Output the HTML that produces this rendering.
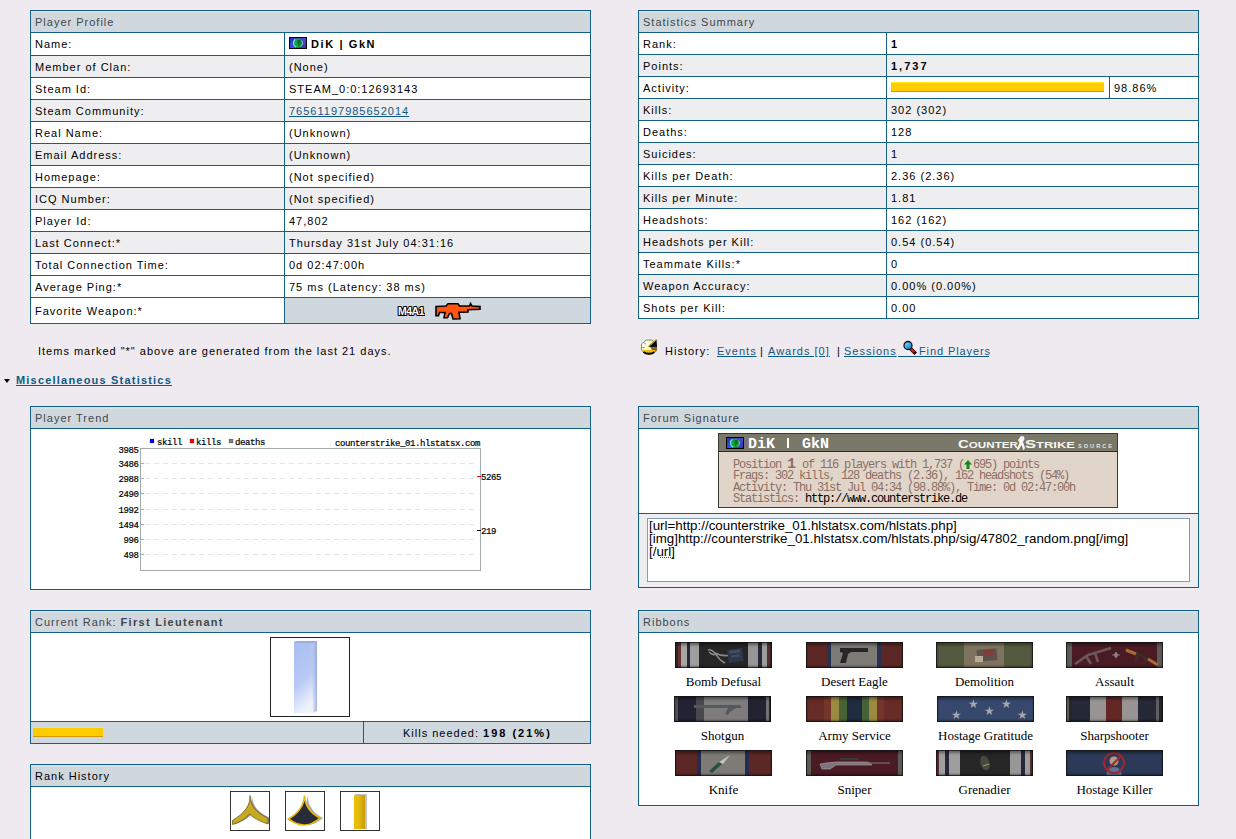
<!DOCTYPE html>
<html><head><meta charset="utf-8">
<style>
html,body{margin:0;padding:0;}
body{width:1236px;height:839px;overflow:hidden;background:#efeaf0;font-family:"Liberation Sans",sans-serif;font-size:11px;letter-spacing:1px;color:#000;position:relative;}
.abs{position:absolute;}
.panel{position:absolute;box-sizing:border-box;border:1px solid #13618a;background:#fff;}
.hd{position:absolute;left:0;right:0;top:0;height:21px;background:linear-gradient(#d9dee4 0 2px,#d0d8de 2px);border-bottom:1px solid #13618a;color:#41474c;}
.hd span{position:absolute;left:4px;top:5px;line-height:13px;white-space:nowrap;}
.tbl{position:absolute;left:0;right:0;}
.row{position:absolute;left:0;right:0;height:21px;border-bottom:1px solid #13618a;background:#fff;}
.row.g{background:#eeedef;}
.row .l{position:absolute;left:4px;top:5px;line-height:13px;white-space:nowrap;}
.row .v{position:absolute;top:5px;line-height:13px;white-space:nowrap;}
b,.bb{letter-spacing:2px;}
.row .dv{position:absolute;top:0;bottom:-1px;width:1px;background:#13618a;}
a{color:#0f5982;text-decoration:underline;}
.rib{position:absolute;width:97px;height:26px;overflow:hidden;filter:saturate(0.85) brightness(0.9) blur(0.35px);}
.rib svg{position:absolute;left:0;top:0;}
.rsh{position:absolute;left:0;top:0;right:0;bottom:0;box-shadow:inset 0 0 0 1px rgba(20,20,20,0.75), inset 0 3px 3px rgba(0,0,0,0.4), inset 0 -2px 2px rgba(0,0,0,0.35);}
.rlab{position:absolute;width:157px;text-align:center;font-family:"Liberation Serif",serif;font-size:13px;line-height:15px;letter-spacing:0;white-space:nowrap;color:#000;}
</style></head><body>

<!-- Player Profile -->
<div class="panel" style="left:30px;top:10px;width:561px;height:314px;">
  <div class="hd"><span>Player Profile</span></div>
  <div class="row" style="top:22px;height:22px;"><span class="l" style="top:5px">Name:</span><div class="dv" style="left:253px"></div>
    <svg class="abs" style="left:258px;top:4px" width="18" height="12" viewBox="0 0 18 12"><defs><linearGradient id="fg" x1="0" y1="0" x2="1" y2="1"><stop offset="0" stop-color="#2a2ab8"/><stop offset="0.5" stop-color="#4848d8"/><stop offset="1" stop-color="#3030b0"/></linearGradient></defs><rect x="0.5" y="0.5" width="17" height="11" fill="url(#fg)" stroke="#000"/><circle cx="9" cy="6" r="4.6" fill="#18a040"/><path d="M6.4,2.3 A4.6,4.6 0 0 0 7.2,10.2" stroke="#48f0e8" stroke-width="1.4" fill="none"/><path d="M8.5,3 L11.5,3.2 L12,5.5 L10.5,7.5 L9.5,9.5 L8.8,7 Z" fill="#086a20"/><path d="M12.8,3.6 A4.6,4.6 0 0 1 12,9.6" stroke="#90e0e8" stroke-width="0.7" fill="none"/></svg>
    <span class="v" style="left:280px;top:5px;font-weight:bold;letter-spacing:1.6px;">DiK | GkN</span></div>
  <div class="row g" style="top:45px;"><span class="l">Member of Clan:</span><div class="dv" style="left:253px"></div><span class="v" style="left:258px">(None)</span></div>
  <div class="row" style="top:67px;"><span class="l">Steam Id:</span><div class="dv" style="left:253px"></div><span class="v" style="left:258px">STEAM_0:0:12693143</span></div>
  <div class="row g" style="top:89px;"><span class="l">Steam Community:</span><div class="dv" style="left:253px"></div><span class="v" style="left:258px"><a>76561197985652014</a></span></div>
  <div class="row" style="top:111px;"><span class="l">Real Name:</span><div class="dv" style="left:253px"></div><span class="v" style="left:258px">(Unknown)</span></div>
  <div class="row g" style="top:133px;"><span class="l">Email Address:</span><div class="dv" style="left:253px"></div><span class="v" style="left:258px">(Unknown)</span></div>
  <div class="row" style="top:155px;"><span class="l">Homepage:</span><div class="dv" style="left:253px"></div><span class="v" style="left:258px">(Not specified)</span></div>
  <div class="row g" style="top:177px;"><span class="l">ICQ Number:</span><div class="dv" style="left:253px"></div><span class="v" style="left:258px">(Not specified)</span></div>
  <div class="row" style="top:199px;"><span class="l">Player Id:</span><div class="dv" style="left:253px"></div><span class="v" style="left:258px">47,802</span></div>
  <div class="row g" style="top:221px;"><span class="l">Last Connect:*</span><div class="dv" style="left:253px"></div><span class="v" style="left:258px">Thursday 31st July 04:31:16</span></div>
  <div class="row" style="top:243px;"><span class="l">Total Connection Time:</span><div class="dv" style="left:253px"></div><span class="v" style="left:258px">0d 02:47:00h</span></div>
  <div class="row" style="top:265px;"><span class="l">Average Ping:*</span><div class="dv" style="left:253px"></div><span class="v" style="left:258px">75 ms (Latency: 38 ms)</span></div>
  <div class="row" style="top:287px;height:25px;border-bottom:none;"><span class="l" style="top:7px">Favorite Weapon:*</span><div class="dv" style="left:253px;bottom:0"></div>
    <div class="abs" style="left:254px;top:0;right:0;bottom:0;background:#d0d8df;"><svg class="abs" style="left:112px;top:7px" width="28" height="12" viewBox="0 0 28 12"><text x="14" y="9.8" text-anchor="middle" font-family="Liberation Sans" font-weight="bold" font-size="10.5" letter-spacing="-0.5" fill="#fff" stroke="#000" stroke-width="2.2" paint-order="stroke" stroke-linejoin="round">M4A1</text></svg>
    <svg class="abs" style="left:149px;top:4px" width="48" height="19" viewBox="-1 -1 48 19"><path d="M1,3.5 L11,3 L13,0.8 L23,0.8 L24.5,3 L34.5,3 L35.5,0.5 L37,3 L45,3.6 L45,6.2 L33,6.8 L33,9 L24,9.2 L25,15.8 L18,16 L16.5,10.5 L14.5,10.5 L12.5,14.8 L9,14.8 L10,9.5 L4.5,9.5 L3.5,12.8 L1,12.8 Z" fill="#ff5510" stroke="#000" stroke-width="1.6" stroke-linejoin="miter"/></svg></div>
  </div>
</div>

<!-- Statistics Summary -->
<div class="panel" style="left:638px;top:10px;width:561px;height:309px;">
  <div class="hd"><span>Statistics Summary</span></div>
  <div class="row" style="top:22px;"><span class="l">Rank:</span><div class="dv" style="left:247px"></div><span class="v" style="left:252px;font-weight:bold;letter-spacing:1.5px">1</span></div>
  <div class="row g" style="top:44px;"><span class="l">Points:</span><div class="dv" style="left:247px"></div><span class="v" style="left:252px;font-weight:bold;letter-spacing:2px">1,737</span></div>
  <div class="row" style="top:66px;"><span class="l">Activity:</span><div class="dv" style="left:247px"></div>
    <div class="abs" style="left:252px;top:5px;width:213px;height:10px;background:linear-gradient(#ffee10 0 1px,#ffcc00 1px 9px,#d49a00 9px 10px);"></div>
    <div class="dv" style="left:470px"></div><span class="v" style="left:475px">98.86%</span></div>
  <div class="row g" style="top:88px;"><span class="l">Kills:</span><div class="dv" style="left:247px"></div><span class="v" style="left:252px">302 (302)</span></div>
  <div class="row" style="top:110px;"><span class="l">Deaths:</span><div class="dv" style="left:247px"></div><span class="v" style="left:252px">128</span></div>
  <div class="row g" style="top:132px;"><span class="l">Suicides:</span><div class="dv" style="left:247px"></div><span class="v" style="left:252px">1</span></div>
  <div class="row" style="top:154px;"><span class="l">Kills per Death:</span><div class="dv" style="left:247px"></div><span class="v" style="left:252px">2.36 (2.36)</span></div>
  <div class="row g" style="top:176px;"><span class="l">Kills per Minute:</span><div class="dv" style="left:247px"></div><span class="v" style="left:252px">1.81</span></div>
  <div class="row" style="top:198px;"><span class="l">Headshots:</span><div class="dv" style="left:247px"></div><span class="v" style="left:252px">162 (162)</span></div>
  <div class="row g" style="top:220px;"><span class="l">Headshots per Kill:</span><div class="dv" style="left:247px"></div><span class="v" style="left:252px">0.54 (0.54)</span></div>
  <div class="row" style="top:242px;"><span class="l">Teammate Kills:*</span><div class="dv" style="left:247px"></div><span class="v" style="left:252px">0</span></div>
  <div class="row g" style="top:264px;"><span class="l">Weapon Accuracy:</span><div class="dv" style="left:247px"></div><span class="v" style="left:252px">0.00% (0.00%)</span></div>
  <div class="row" style="top:286px;border-bottom:none;"><span class="l">Shots per Kill:</span><div class="dv" style="left:247px;bottom:0"></div><span class="v" style="left:252px">0.00</span></div>
</div>


<!-- notes -->
<div class="abs" style="left:38px;top:345px;line-height:13px;white-space:nowrap;">Items marked "*" above are generated from the last 21 days.</div>

<!-- history line -->
<svg class="abs" style="left:641px;top:339px" width="16" height="16" viewBox="0 0 16 16"><defs><radialGradient id="hg" cx="0.3" cy="0.35" r="0.75"><stop offset="0" stop-color="#ffffff"/><stop offset="0.55" stop-color="#fbf8b8"/><stop offset="1" stop-color="#e8d040"/></radialGradient></defs><path d="M5,1 L11,1 L15.5,5 L15.5,11 L12,15 L4,15 L0.5,11 L0.5,5 Z" fill="url(#hg)" stroke="#707070" stroke-width="0.8"/><path d="M7.5,7.5 L15.5,0.5 L16,8 L10,8.5 Z" fill="#0a0a0a"/><path d="M10,8.5 L16,8 L15.5,12.5 L11,12 Z" fill="#8a5a2a"/><path d="M1.5,11 L14.5,11 L12.5,14 L3.5,14 Z" fill="#f0c000"/><path d="M2.5,13 Q8,16.5 13.5,13" stroke="#000" stroke-width="1.8" fill="none"/><line x1="7.5" y1="7.5" x2="15.5" y2="0.5" stroke="#c09000" stroke-width="1.1"/><path d="M3,3.5 L5,5.5 M1.5,8.5 L3.5,8.5" stroke="#606060" stroke-width="0.8"/></svg>
<div class="abs" style="left:665px;top:345px;line-height:13px;white-space:nowrap;">History:</div>
<div class="abs" style="left:717px;top:345px;line-height:13px;white-space:nowrap;"><a>Events</a></div>
<div class="abs" style="left:760px;top:345px;line-height:13px;">|</div>
<div class="abs" style="left:768px;top:345px;line-height:13px;white-space:nowrap;"><a>Awards [0]</a></div>
<div class="abs" style="left:837px;top:345px;line-height:13px;">|</div>
<div class="abs" style="left:844px;top:345px;line-height:13px;white-space:nowrap;"><a>Sessions</a></div>
<div class="abs" style="left:898px;top:356px;width:91px;height:1px;background:#0f5982;"></div><div class="abs" style="left:919px;top:345px;line-height:13px;white-space:nowrap;color:#0f5982;letter-spacing:0.9px;">Find Players</div>
<svg class="abs" style="left:902px;top:340px" width="15" height="15" viewBox="0 0 15 15"><defs><linearGradient id="mg" x1="0" y1="0" x2="1" y2="1"><stop offset="0" stop-color="#b8e8ff"/><stop offset="0.5" stop-color="#38b0f0"/><stop offset="1" stop-color="#2070c0"/></linearGradient></defs><line x1="9" y1="9" x2="12.5" y2="12.5" stroke="#300" stroke-width="3.6" stroke-linecap="square"/><line x1="9" y1="9" x2="12.3" y2="12.3" stroke="#e01818" stroke-width="2"/><circle cx="6" cy="5.5" r="4" fill="url(#mg)" stroke="#101418" stroke-width="1.3"/></svg>

<!-- misc stats -->
<div class="abs" style="left:4px;top:379px;width:0;height:0;border-left:3.5px solid transparent;border-right:3.5px solid transparent;border-top:4px solid #000;"></div>
<div class="abs" style="left:16px;top:374px;line-height:13px;white-space:nowrap;font-weight:bold;letter-spacing:1.2px;"><a>Miscellaneous Statistics</a></div>

<!-- Player Trend -->
<div class="panel" style="left:30px;top:406px;width:561px;height:184px;">
  <div class="hd"><span>Player Trend</span></div>
</div>

<svg class="abs" style="left:100px;top:432px" width="420" height="145" viewBox="100 432 420 145" font-family="Liberation Mono" font-size="9" letter-spacing="-0.4" fill="#000" stroke="#000" stroke-width="0.2">
<rect x="140.5" y="448.5" width="340" height="122" fill="#fff" stroke="#a4acac" stroke-width="1"/>
<line x1="145" y1="463.5" x2="478" y2="463.5" stroke="#e4e4e4" stroke-width="1" stroke-dasharray="5,4"/>
<line x1="141" y1="463.5" x2="144" y2="463.5" stroke="#a4acac" stroke-width="1"/>
<line x1="145" y1="478.5" x2="478" y2="478.5" stroke="#e4e4e4" stroke-width="1" stroke-dasharray="5,4"/>
<line x1="141" y1="478.5" x2="144" y2="478.5" stroke="#a4acac" stroke-width="1"/>
<line x1="145" y1="493.5" x2="478" y2="493.5" stroke="#e4e4e4" stroke-width="1" stroke-dasharray="5,4"/>
<line x1="141" y1="493.5" x2="144" y2="493.5" stroke="#a4acac" stroke-width="1"/>
<line x1="145" y1="509.5" x2="478" y2="509.5" stroke="#e4e4e4" stroke-width="1" stroke-dasharray="5,4"/>
<line x1="141" y1="509.5" x2="144" y2="509.5" stroke="#a4acac" stroke-width="1"/>
<line x1="145" y1="524.5" x2="478" y2="524.5" stroke="#e4e4e4" stroke-width="1" stroke-dasharray="5,4"/>
<line x1="141" y1="524.5" x2="144" y2="524.5" stroke="#a4acac" stroke-width="1"/>
<line x1="145" y1="539.5" x2="478" y2="539.5" stroke="#e4e4e4" stroke-width="1" stroke-dasharray="5,4"/>
<line x1="141" y1="539.5" x2="144" y2="539.5" stroke="#a4acac" stroke-width="1"/>
<line x1="145" y1="554.5" x2="478" y2="554.5" stroke="#e4e4e4" stroke-width="1" stroke-dasharray="5,4"/>
<line x1="141" y1="554.5" x2="144" y2="554.5" stroke="#a4acac" stroke-width="1"/>
<text x="138.5" y="453.0" text-anchor="end">3985</text>
<text x="138.5" y="467.0" text-anchor="end">3486</text>
<text x="138.5" y="482.0" text-anchor="end">2988</text>
<text x="138.5" y="497.0" text-anchor="end">2490</text>
<text x="138.5" y="513.0" text-anchor="end">1992</text>
<text x="138.5" y="528.0" text-anchor="end">1494</text>
<text x="138.5" y="543.0" text-anchor="end">996</text>
<text x="138.5" y="558.0" text-anchor="end">498</text>
<rect x="150" y="439" width="4" height="4" fill="#0000ff"/><text x="157" y="445">skill</text>
<rect x="190" y="439" width="4" height="4" fill="#ff0000"/><text x="196" y="445">kills</text>
<rect x="229" y="439" width="4" height="4" fill="#808080"/><text x="235" y="445">deaths</text>
<text x="335" y="446">counterstrike_01.hlstatsx.com</text>
<line x1="477" y1="476.5" x2="481" y2="476.5" stroke="#ff0000" stroke-width="1"/><text x="481" y="480">5265</text>
<line x1="477" y1="530.5" x2="481" y2="530.5" stroke="#000" stroke-width="1"/><text x="481" y="534">219</text>
</svg>

<!-- Forum Signature -->
<div class="panel" style="left:638px;top:406px;width:561px;height:182px;">
  <div class="hd"><span>Forum Signature</span></div>
  <div class="abs" style="left:0;right:0;top:106px;height:1px;background:#13618a;"></div>
  <div class="abs" style="left:0;right:0;top:107px;bottom:0;background:#eeedef;"></div>
  <div class="abs" style="left:8px;top:111px;width:541px;height:62px;border:1px solid #7f9db9;background:#fff;"></div>
</div>


<!-- signature image -->
<div class="abs" style="left:718px;top:433px;width:398px;height:73px;border:1px solid #3a3a30;background:#e1d5c9;letter-spacing:0;overflow:hidden;">
  <div class="abs" style="left:0;top:0;width:398px;height:17px;background:#7a7869;border-bottom:1px solid #2e2e26;"></div>
  <svg class="abs" style="left:7px;top:3px" width="18" height="12" viewBox="0 0 18 12"><rect x="0.5" y="0.5" width="17" height="11" fill="url(#fg)" stroke="#000"/><circle cx="9" cy="6" r="4.6" fill="#18a040"/><path d="M6.4,2.3 A4.6,4.6 0 0 0 7.2,10.2" stroke="#48f0e8" stroke-width="1.4" fill="none"/><path d="M8.5,3 L11.5,3.2 L12,5.5 L10.5,7.5 L9.5,9.5 L8.8,7 Z" fill="#086a20"/><path d="M12.8,3.6 A4.6,4.6 0 0 1 12,9.6" stroke="#90e0e8" stroke-width="0.7" fill="none"/></svg>
  <div class="abs" style="left:29px;top:2px;font-family:'Liberation Mono',monospace;font-size:15px;font-weight:bold;line-height:18px;color:#fff;white-space:pre;letter-spacing:0;">DiK <span style="display:inline-block;width:9px;height:18px;position:relative;vertical-align:top"><span style="position:absolute;left:3px;top:2px;width:2px;height:10px;background:#fff"></span></span> GkN</div>
  <svg class="abs" style="left:236px;top:1px" width="162" height="17" viewBox="0 0 162 17">
    <text x="3" y="12.5" font-family="Liberation Sans" font-weight="bold" font-size="8.6" fill="#f6f6f2" textLength="60" lengthAdjust="spacingAndGlyphs"><tspan font-size="11">C</tspan>OUNTER</text>
    <path d="M66,1 L69,1.5 L69.5,4 L68,7 L70,13 L68.5,15.5 L66.5,10 L63.5,15 L61.5,14.5 L64.5,8 L63,5 Z" fill="#f6f6f2"/>
    <text x="70" y="12.5" font-family="Liberation Sans" font-weight="bold" font-size="8.6" fill="#f6f6f2" textLength="50" lengthAdjust="spacingAndGlyphs"><tspan font-size="11">S</tspan>TRIKE</text>
    <text x="123" y="12.5" font-family="Liberation Sans" font-weight="bold" font-size="5.6" fill="#e4e4dc" textLength="34" lengthAdjust="spacing">SOURCE</text>
  </svg>
  <div class="abs" style="left:14px;top:25px;font-family:'Liberation Mono',monospace;font-size:12px;line-height:11.33px;color:#8c6f65;white-space:pre;letter-spacing:-1.2px;">Position <span style="font-size:15px;font-weight:bold;line-height:11px;letter-spacing:0">1</span> of 116 players with 1,737 (<svg width="8" height="9" viewBox="0 0 8 9" style="vertical-align:-1px;margin:0 1px 0 0"><path d="M4,0 L8,4.5 L5.5,4.5 L5.5,9 L2.5,9 L2.5,4.5 L0,4.5 Z" fill="#138a13"/></svg>695) points
Frags: 302 kills, 128 deaths (2.36), 162 headshots (54%)
Activity: Thu 31st Jul 04:34 (98.88%), Time: 0d 02:47:00h
Statistics: <span style="color:#000">http://www.counterstrike.de</span></div>
</div>
<div class="abs" style="left:649px;top:519px;font-size:13.33px;line-height:13px;letter-spacing:0;white-space:pre;color:#000;">[url=http://counterstrike_01.hlstatsx.com/hlstats.php]
[img]http://counterstrike_01.hlstatsx.com/hlstats.php/sig/47802_random.png[/img]
[/url]</div>
<div class="abs" style="left:660px;top:557px;width:13px;height:1px;border-top:1px dotted #ff0000;"></div>

<!-- Current Rank -->
<div class="panel" style="left:30px;top:610px;width:561px;height:134px;">
  <div class="hd"><span>Current Rank: <b style="letter-spacing:1.3px">First Lieutenant</b></span></div>
  <div class="abs" style="left:239px;top:26px;width:78px;height:78px;border:1px solid #222;background:#fff;">
    <svg class="abs" style="left:0;top:0" width="78" height="78" viewBox="0 0 78 78"><defs>
      <linearGradient id="rb1" x1="0" y1="0" x2="0.3" y2="1"><stop offset="0" stop-color="#a8bdf0"/><stop offset="0.6" stop-color="#b8caf4"/><stop offset="1" stop-color="#eef2fc"/></linearGradient>
      <linearGradient id="rb2" x1="0" y1="0" x2="1" y2="0"><stop offset="0" stop-color="#c8d4f4" stop-opacity="0.2"/><stop offset="1" stop-color="#8ea0d0"/></linearGradient></defs>
      <path d="M23,4 L26,3 L46,3 L46,73 L42,75 L23,75 Z" fill="url(#rb1)"/>
      <path d="M40,4 L46,3 L46,73 L42,75 Z" fill="url(#rb2)" opacity="0.8"/>
      <path d="M23,4 L26,3 L46,3 L42,5 L23,5 Z" fill="#90a4d8" opacity="0.7"/>
    </svg>
  </div>
  <div class="abs" style="left:0;right:0;top:110px;height:1px;background:#13618a;"></div>
  <div class="abs" style="left:0;right:0;top:111px;bottom:0;background:#d0d8df;"></div>
  <div class="abs" style="left:332px;top:111px;width:1px;bottom:0;background:#13618a;"></div>
  <div class="abs" style="left:2px;top:116px;width:70px;height:10px;background:linear-gradient(#ffee10 0 1px,#ffcc00 1px 9px,#d49a00 9px 10px);"></div>
  <div class="abs" style="left:372px;top:116px;line-height:13px;white-space:nowrap;">Kills needed: <b>198 (21%)</b></div>
</div>

<!-- Rank History -->
<div class="panel" style="left:30px;top:764px;width:561px;height:90px;">
  <div class="hd" style="color:#000"><span>Rank History</span></div>
  <div class="abs" style="left:199px;top:26px;width:38px;height:38px;border:1px solid #333;background:#fff;">
    <svg width="38" height="38" viewBox="0 0 38 38"><path d="M19,3.5 C19.5,13 24,20 37,26 L37,32 C29,29.5 22.5,26 18.5,22 C15,26.5 9,30 1.5,32.5 L1.5,28.5 C14,21 19.5,13 19,3.5 Z" fill="#8c8c9c" transform="translate(2,0)" opacity="0.85"/><path d="M19,3.5 C19.5,13 24,20 37,26 L37,32 C29,29.5 22.5,26 18.5,22 C15,26.5 9,30 1.5,32.5 L1.5,28.5 C14,21 19.5,13 19,3.5 Z" fill="#c8a820" stroke="#5a4a10" stroke-width="0.7"/></svg></div>
  <div class="abs" style="left:254px;top:26px;width:38px;height:38px;border:1px solid #333;background:#fff;">
    <svg width="38" height="38" viewBox="0 0 38 38"><path d="M18.5,3.5 C19,15 26,22 34,26 C28,31 23,33 18.5,33 C13,33 8,31 2.5,27 C11,22 18,15 18.5,3.5 Z" fill="#9a9aa8" transform="translate(3,0)" opacity="0.85"/><path d="M18.5,3.5 C19,15 26,22 34,26 C28,31 23,33 18.5,33 C13,33 8,31 2.5,27 C11,22 18,15 18.5,3.5 Z" fill="#282c38" stroke="#e8b800" stroke-width="1.6"/></svg></div>
  <div class="abs" style="left:309px;top:26px;width:38px;height:38px;border:1px solid #333;background:#fff;">
    <svg width="38" height="38" viewBox="0 0 38 38"><defs><linearGradient id="yb" x1="0" y1="0" x2="1" y2="0"><stop offset="0" stop-color="#f0c000"/><stop offset="0.5" stop-color="#e0b810"/><stop offset="1" stop-color="#c89c00"/></linearGradient></defs><rect x="14" y="2" width="12" height="35" fill="#9a9aa4" opacity="0.6"/><rect x="13" y="3" width="11" height="34" fill="url(#yb)"/></svg></div>
</div>

<!-- Ribbons -->
<div class="panel" style="left:638px;top:610px;width:561px;height:196px;">
  <div class="hd"><span>Ribbons</span></div>
</div>

<!-- ribbons -->
<div class="rib" style="left:675px;top:642px;background:linear-gradient(to right,#3a2c2c 0px 3px,#7a3434 3px 6px,#b8b8b8 6px 12px,#2c2c44 12px 15px,#b0b0b0 15px 24px,#2c2a2a 24px 73px,#a8a8a8 73px 83px,#2c2c44 83px 87px,#b0b0b0 87px 92px,#6a3030 92px 95px,#3a2c2c 95px 97px);"><svg width="97" height="26" viewBox="0 0 97 26"><path d="M33,8 Q36,7 40,11 Q48,15 56,13 M34,10 Q38,14 41,12 Q44,18 50,21" stroke="#9a9a9a" stroke-width="1.6" fill="none"/><rect x="53" y="7" width="15" height="13" fill="#343c54" transform="rotate(-8 60 14)"/><rect x="55" y="8" width="11" height="3" fill="#4a5470" transform="rotate(-8 60 14)"/><rect x="56" y="13" width="9" height="2" fill="#485270" transform="rotate(-8 60 14)"/></svg><div class="rsh"></div></div>
<div class="rlab" style="left:645px;top:674px;">Bomb Defusal</div>
<div class="rib" style="left:806px;top:642px;background:linear-gradient(to right,#6e2a26 0px 21px,#2a3868 21px 25px,#8c8882 25px 71px,#2a3868 71px 75px,#6e2a26 75px 97px);"><svg width="97" height="26" viewBox="0 0 97 26"><path d="M34,6 L62,6 L62,10 L45,10 L42,12 L40,21 L34,21 L37,11 L34,10 Z" fill="#2a2a2a"/></svg><div class="rsh"></div></div>
<div class="rlab" style="left:776px;top:674px;">Desert Eagle</div>
<div class="rib" style="left:936px;top:642px;background:linear-gradient(to right,#5a5a4a 0px 3px,#5e6642 3px 28px,#8e8066 28px 68px,#5e6642 68px 94px,#5a5a4a 94px 97px);"><svg width="97" height="26" viewBox="0 0 97 26"><rect x="41" y="7" width="20" height="12" fill="#6a5a50" transform="rotate(-5 51 13)"/><rect x="47" y="8" width="10" height="5" fill="#9a4040"/><rect x="39" y="14" width="8" height="6" fill="#c8c0a8"/></svg><div class="rsh"></div></div>
<div class="rlab" style="left:906px;top:674px;">Demolition</div>
<div class="rib" style="left:1066px;top:642px;background:linear-gradient(to right,#6a6560 0px 6px,#5a1c28 6px 91px,#6a6560 91px 97px);"><svg width="97" height="26" viewBox="0 0 97 26"><path d="M9,22 L22,13 L45,6 M20,14 L25,22 M29,11 L32,20" stroke="#7a6060" stroke-width="2.6" fill="none"/><path d="M58,7 L75,13 L92,23 M72,12 L69,21 M80,16 L78,22" stroke="#4a3028" stroke-width="2.4" fill="none"/><path d="M60,8 L70,12 M82,17 L92,23" stroke="#c07830" stroke-width="3" fill="none"/><path d="M48,13 L50,10 L52,13 L50,16 Z M46,13 L54,13" stroke="#a09090" stroke-width="0.8" fill="#a09090"/></svg><div class="rsh"></div></div>
<div class="rlab" style="left:1036px;top:674px;">Assault</div>
<div class="rib" style="left:674px;top:696px;background:linear-gradient(to right,#585860 0px 4px,#24263a 4px 22px,#505058 22px 30px,#8c8a8a 30px 74px,#24263a 74px 92px,#808080 92px 95px,#2a2a30 95px 97px);"><svg width="97" height="26" viewBox="0 0 97 26"><path d="M20,9 L66,9 L68,12 L62,12 L56,16 L54,19 L51,18 L54,12 L20,12 Z" fill="#5a6468"/></svg><div class="rsh"></div></div>
<div class="rlab" style="left:644px;top:728px;">Shotgun</div>
<div class="rib" style="left:806px;top:696px;background:linear-gradient(to right,#7a2e26 0px 18px,#8a3a28 18px 25px,#b09a38 25px 33px,#4a7038 33px 41px,#22304a 41px 56px,#4a7038 56px 63px,#b09a38 63px 71px,#8a3a28 71px 78px,#7a2e26 78px 97px);"><div class="rsh"></div></div>
<div class="rlab" style="left:776px;top:728px;">Army Service</div>
<div class="rib" style="left:937px;top:696px;background:linear-gradient(to right,#3a5080 0px 97px);"><svg width="97" height="26" viewBox="0 0 97 26" fill="#b8b8c0"><text x="14" y="23" font-size="12" font-family="Liberation Sans">&#9733;</text><text x="31" y="12" font-size="12" font-family="Liberation Sans">&#9733;</text><text x="47" y="19" font-size="12" font-family="Liberation Sans">&#9733;</text><text x="64" y="12" font-size="12" font-family="Liberation Sans">&#9733;</text><text x="80" y="23" font-size="12" font-family="Liberation Sans">&#9733;</text></svg><div class="rsh"></div></div>
<div class="rlab" style="left:907px;top:728px;">Hostage Gratitude</div>
<div class="rib" style="left:1066px;top:696px;background:linear-gradient(to right,#6a6a6a 0px 3px,#2a2a30 3px 6px,#282c40 6px 24px,#aaa4a4 24px 40px,#7a2828 40px 56px,#aaa4a4 56px 72px,#282c40 72px 90px,#6a6a6a 90px 93px,#2a2a30 93px 97px);"><div class="rsh"></div></div>
<div class="rlab" style="left:1036px;top:728px;">Sharpshooter</div>
<div class="rib" style="left:675px;top:750px;background:linear-gradient(to right,#6e2a26 0px 22px,#2a3060 22px 26px,#8c8882 26px 70px,#2a3060 70px 74px,#6e2a26 74px 97px);"><svg width="97" height="26" viewBox="0 0 97 26"><path d="M34,21 L44,12 L47,14 L37,23 Z" fill="#2a5a40"/><path d="M44,12 L55,5 L48,14 Z" fill="#d8d8d0"/></svg><div class="rsh"></div></div>
<div class="rlab" style="left:645px;top:782px;">Knife</div>
<div class="rib" style="left:806px;top:750px;background:linear-gradient(to right,#6a6560 0px 5px,#5a1c28 5px 92px,#6a6560 92px 97px);"><svg width="97" height="26" viewBox="0 0 97 26"><path d="M14,14 L20,13 L30,12 L62,12 L66,15 L30,15 L24,19 L16,19 Z" fill="#8a8088" stroke="#c0b8c0" stroke-width="0.6"/><rect x="34" y="8" width="18" height="2" fill="#404040"/><line x1="62" y1="13" x2="84" y2="13" stroke="#908890" stroke-width="1"/></svg><div class="rsh"></div></div>
<div class="rlab" style="left:776px;top:782px;">Sniper</div>
<div class="rib" style="left:936px;top:750px;background:linear-gradient(to right,#6a3030 0px 3px,#b0b0b0 3px 9px,#2c2c44 9px 13px,#b0b0b0 13px 24px,#2c2a2a 24px 74px,#a8a8a8 74px 85px,#2c2c44 85px 89px,#b0b0b0 89px 94px,#6a3030 94px 97px);"><svg width="97" height="26" viewBox="0 0 97 26"><ellipse cx="49" cy="13" rx="5" ry="8" fill="#505048" stroke="#2a2a26" transform="rotate(-15 49 13)"/><line x1="47" y1="16" x2="53" y2="14" stroke="#a0b040" stroke-width="1.2"/></svg><div class="rsh"></div></div>
<div class="rlab" style="left:906px;top:782px;">Grenadier</div>
<div class="rib" style="left:1066px;top:750px;background:linear-gradient(to right,#2e4068 0px 97px);"><svg width="97" height="26" viewBox="0 0 97 26"><path d="M40,26 Q41,17 48,17 Q55,17 56,26 Z" fill="#6080b0"/><circle cx="48" cy="11" r="4.5" fill="#d0a890"/><circle cx="48" cy="13" r="10" fill="none" stroke="#c02830" stroke-width="2"/><line x1="41" y1="20" x2="55" y2="6" stroke="#c02830" stroke-width="2"/></svg><div class="rsh"></div></div>
<div class="rlab" style="left:1036px;top:782px;">Hostage Killer</div>
<!-- /ribbons -->
</body></html>
